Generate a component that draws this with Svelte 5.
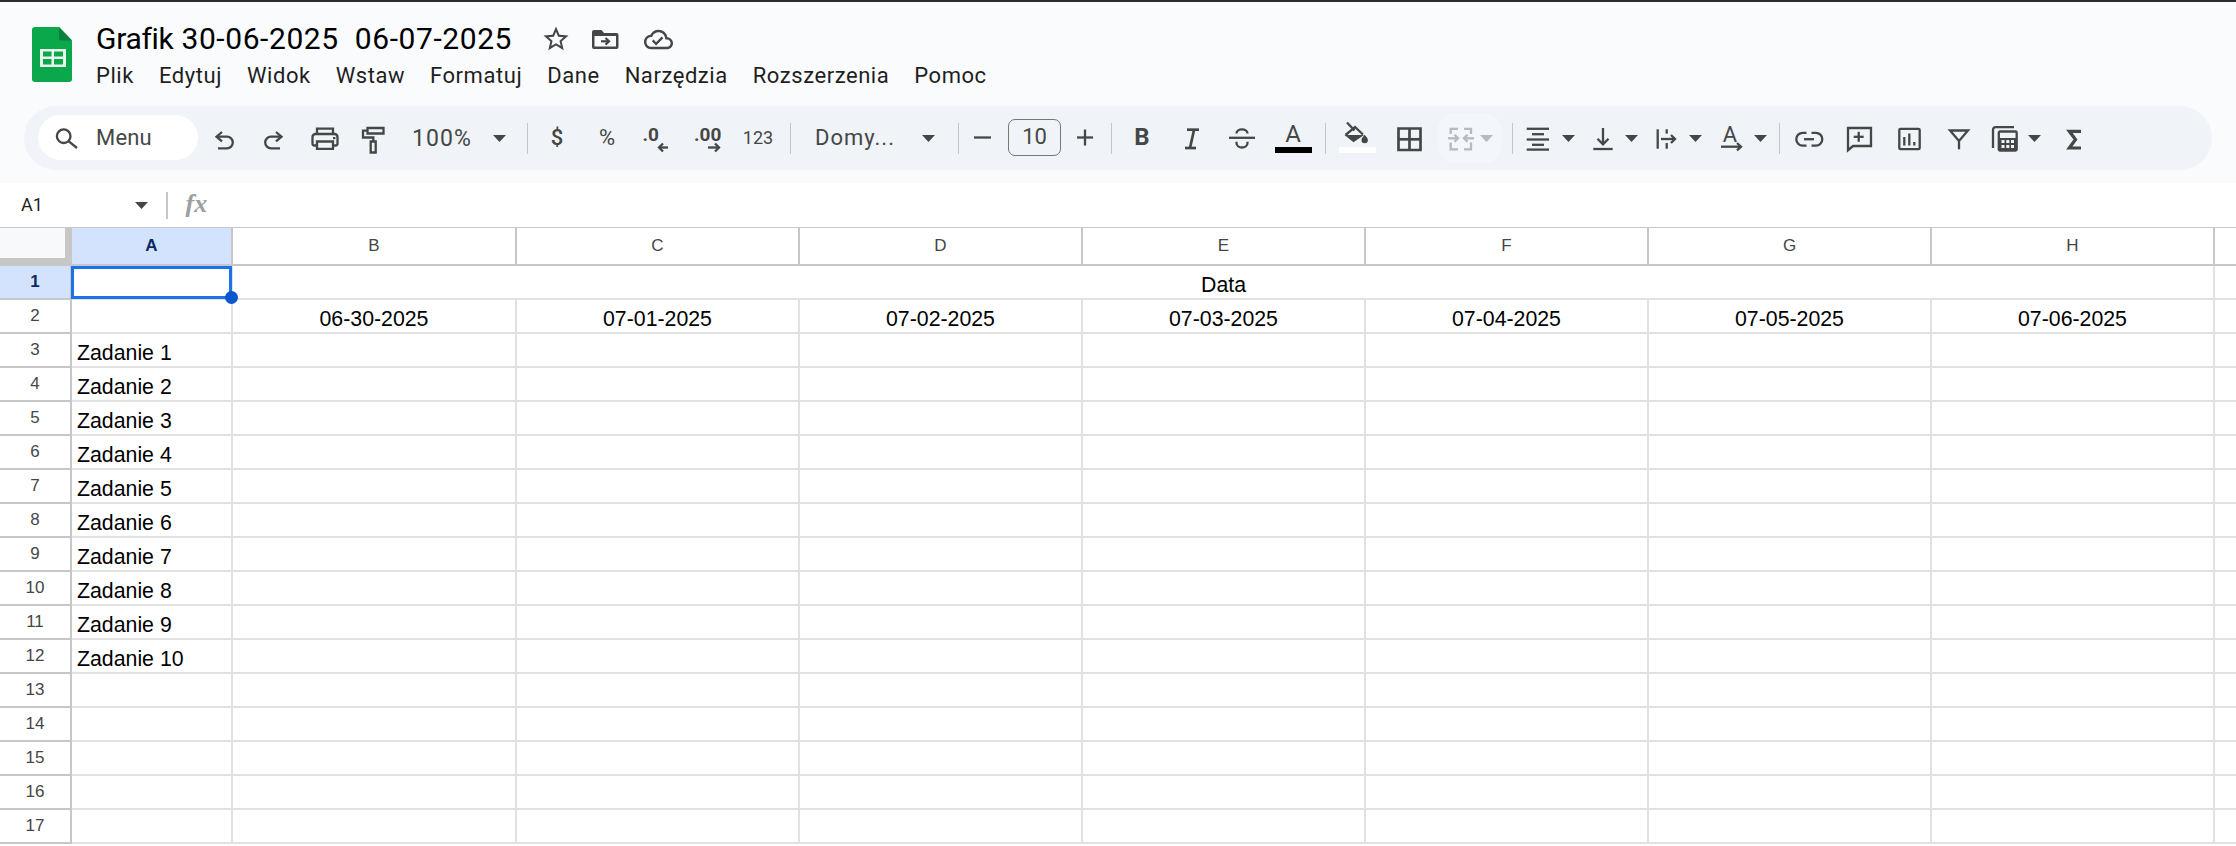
<script>
  const icons = {
    undo: { s: ['M16 12l-5.5 4.7 5.5 4.7', 'M11 16.7h10a5.8 5.8 0 0 1 0 11.6h-9'] },
    redo: { s: ['M20 12l5.5 4.7-5.5 4.7', 'M25 16.7H15a5.8 5.8 0 0 0 0 11.6h9'] },
    print: { s: ['M10 14V8.7h16V14', 'M10 25.5H7.5a2 2 0 0 1-2-2v-6.5a3 3 0 0 1 3-3h19a3 3 0 0 1 3 3v6.5a2 2 0 0 1-2 2H26', 'M10 21.5h16v7.3H10z'], f: ['M26 17h2.4v2.2H26z'] },
    paint: { s: ['M12.5 8h16v5.5h-16z', 'M12.5 10.7H8v6.8h10.3V21', 'M15.7 21.5h5v11h-5z'] },
    dec: { s: ['M29 27.5h-9', 'M24 23.5l-4 4 4 4'], t: { x: 3.5, y: 21, v: '.0', size: 19, w: 700 } },
    inc: { s: ['M18 27.5h11', 'M25 23.5l4 4-4 4'], t: { x: 4, y: 21, v: '.00', size: 19, w: 700 } },
    italic: { s: ['M13 9.7h12', 'M11 28h11', 'M20 10l-4 18'], bold: true },
    strike: { s: ['M5 17.8h26', 'M12.5 13.5c0-5.5 11-5.5 11 0', 'M12.5 21.7v1.3c0 6 11 6 11 0v-1.3'] },
    fill: { s: ['M8 2.5l7.5 8', 'M6.5 15l9.5-8 8 7.5'], f: ['M5.5 15h19.6l-10.6 7.2z', 'M25.7 14.7c1.6 2.3 3.2 3.6 3.2 5.3a3.2 3.2 0 0 1-6.4 0c0-1.7 1.6-3 3.2-5.3z'] },
    borders: { s: ['M7.5 8.5h22v21.5h-22z', 'M18.5 8.5v21.5', 'M7.5 19.3h22'], bold: true },
    merge: { s: ['M15 8.8H7.7v5.2', 'M7.7 22.5v6.8H15', 'M21 8.8h7v5.2', 'M28 22.5v6.8h-7', 'M5 18.3h9.5', 'M11.5 14.8l3.5 3.5-3.5 3.5', 'M31 18.3h-9.5', 'M24.5 14.8L21 18.3l3.5 3.5'], muted: true },
    align: { s: ['M6.7 8.8H29', 'M12 14.2h12', 'M6.7 19.5H29', 'M12 24.8h12', 'M6.7 29.6H29'] },
    valign: { s: ['M8.3 29h19.4', 'M18 8v16', 'M12.5 18.8L18 24.3l5.5-5.5'] },
    wrap: { s: ['M8.7 9.3v19.4', 'M17.7 9.3v4.3', 'M17.7 23v5.7', 'M12 19h14', 'M22 15l4 4-4 4'] },
    rotate: { s: ['M8 26.7h20', 'M24 23l4 3.7-4 3.7'], t: { x: 17, y: 22, v: 'A', size: 22, w: 400, anchor: 'middle' } },
    link: { s: ['M15.5 12.8h-3.8a6.4 6.4 0 0 0 0 12.8h3.8', 'M20.5 12.8h4.4a6.4 6.4 0 0 1 0 12.8h-4.4', 'M13 19.2h10'] },
    comment: { s: ['M7 8h23v18H12l-5 4.2z', 'M17.7 11.8v10', 'M12.7 16.8h10'] },
    chart: { s: ['M9.5 8.8h18a1.2 1.2 0 0 1 1.2 1.2v18a1.2 1.2 0 0 1-1.2 1.2h-18a1.2 1.2 0 0 1-1.2-1.2V10a1.2 1.2 0 0 1 1.2-1.2z', 'M13.3 17v8.5', 'M18.3 13.5v12', 'M23.3 22v3.5'] },
    filter: { s: ['M9 10.5h18l-9 10.5z', 'M18 21v8.3'] },
    calc: { s: ['M25 7.2H6.5a2.5 2.5 0 0 0-2.5 2.5V28', 'M11 11.5h15.5a1.2 1.2 0 0 1 1.2 1.2v16.6a1.2 1.2 0 0 1-1.2 1.2H11a1.2 1.2 0 0 1-1.2-1.2V12.7A1.2 1.2 0 0 1 11 11.5z'], f: ['M10 18h17.5v12.5H10z'], w: ['M12.5 20h3v3h-3zM17.3 20h3v3h-3zM22 20h3v3h-3zM12.5 25h3v3h-3zM17.3 25h3v3h-3zM22 25h3v3h-3z'] },
    sigma: { s: ['M24 11.3H12.3l6.2 8.2-6.2 8.5H24'], heavy: true },
    minus: { s: ['M9 17.5h17'] },
    plus: { s: ['M10 17.5h16', 'M18 9.5v16'] }
  };

  const menus = ['Plik', 'Edytuj', 'Widok', 'Wstaw', 'Formatuj', 'Dane', 'Narzędzia', 'Rozszerzenia', 'Pomoc'];

  const tools = [
    { i: 'undo', w: 52 }, { i: 'redo', w: 48 }, { i: 'print', w: 54 }, { i: 'paint', w: 42 },
    { text: '100%', w: 96, cls: 'zoomv' }, { arrow: 1, w: 18 },
    { sep: 1, ml: 19 },
    { text: '$', w: 50, ml: 4, cls: 'dollar' }, { text: '%', w: 50, cls: 'pct' },
    { i: 'dec', w: 50 }, { i: 'inc', w: 51 }, { text: '123', w: 50, cls: 'num' },
    { sep: 1, ml: 7 },
    { text: 'Domy...', w: 127, cls: 'font' }, { arrow: 1, w: 20 },
    { sep: 1, ml: 20 },
    { i: 'minus', w: 48 }, { text: '10', w: 53, ml: 1, cls: 'size' }, { i: 'plus', w: 48 },
    { sep: 1, ml: 2 },
    { text: 'B', w: 60, cls: 'bold' }, { i: 'italic', w: 40 }, { i: 'strike', w: 60 },
    { color: 'A', w: 42 },
    { sep: 1, ml: 11 },
    { fill: 1, w: 62 }, { i: 'borders', w: 42 },
    { merge: 1, w: 63, ml: 8 },
    { sep: 1, ml: 11 },
    { i: 'align', w: 50 }, { arrow: 1, w: 10 }, { i: 'valign', w: 36, ml: 12 }, { arrow: 1, w: 20 },
    { i: 'wrap', w: 36, ml: 8 }, { arrow: 1, w: 20 }, { i: 'rotate', w: 36, ml: 8 }, { arrow: 1, w: 22 },
    { sep: 1, ml: 8 },
    { i: 'link', w: 58 }, { i: 'comment', w: 42 }, { i: 'chart', w: 58 }, { i: 'filter', w: 42 },
    { i: 'calc', w: 36, ml: 9 }, { arrow: 1, w: 19 }, { i: 'sigma', w: 62 }
  ];

  const cols = ['A', 'B', 'C', 'D', 'E', 'F', 'G', 'H'];
  const dates = ['06-30-2025', '07-01-2025', '07-02-2025', '07-03-2025', '07-04-2025', '07-05-2025', '07-06-2025'];
  const blanks = Array(8).fill(0);
  const rows = Array.from({ length: 15 }, (_, k) => {
    const n = k + 3;
    return { n, label: n <= 12 ? `Zadanie ${n - 2}` : '' };
  });
</script>

{#snippet icon(name)}
  {@const ic = icons[name]}
  <svg class="ico" class:muted={ic.muted} viewBox="0 0 36 36" width="36" height="36">
    {#each ic.f ?? [] as d}<path class="solid" {d} />{/each}
    {#each ic.w ?? [] as d}<path class="hole" {d} />{/each}
    {#each ic.s as d}<path class="line" class:thick={ic.bold} class:heavy={ic.heavy} {d} />{/each}
    {#if ic.t}
      <text class="svgt" x={ic.t.x} y={ic.t.y} font-size={ic.t.size} font-weight={ic.t.w} text-anchor={ic.t.anchor ?? 'start'}>{ic.t.v}</text>
    {/if}
  </svg>
{/snippet}

{#snippet caret(muted)}
  <svg class="caret" class:muted viewBox="0 0 13 7" width="13" height="7"><path d="M0 0h13L6.5 7z" /></svg>
{/snippet}

<div class="page">
  <header class="head">
    <div class="top">
      <svg class="logo" viewBox="0 0 40 55" width="40" height="55">
        <path d="M3 0h24l13 13.5V52a3 3 0 0 1-3 3H3a3 3 0 0 1-3-3V3a3 3 0 0 1 3-3z" fill="#0aa84b" />
        <path d="M27 0l13 13.5H29.5A2.5 2.5 0 0 1 27 11z" fill="#0b8040" />
        <path d="M8 22h26v18H8z" fill="#e9f7ee" />
        <path d="M11 24.5h8.5v5H11zM22 24.5h9v5h-9zM11 32h8.5v5.5H11zM22 32h9v5.5h-9z" fill="#0aa84b" />
      </svg>
      <div class="titles">
        <div class="title-row">
          <span class="title"><span class="tname">Grafik</span> 30-06-2025  06-07-2025</span>
          <svg class="star" viewBox="0 0 24 24" width="30" height="30"><path d="M22 9.24l-7.19-.62L12 2 9.19 8.63 2 9.24l5.46 4.73L5.82 21 12 17.27 18.18 21l-1.63-7.03L22 9.24zM12 15.4l-3.76 2.27 1-4.28-3.32-2.88 4.38-.38L12 6.1l1.71 4.04 4.38.38-3.32 2.88 1 4.28L12 15.4z" /></svg>
          <svg class="folder" viewBox="0 0 36 36" width="36" height="36">
            <path fill-rule="evenodd" d="M7 9h7.5l2.5 3h12.5a2 2 0 0 1 2 2v12a2 2 0 0 1-2 2H7a2 2 0 0 1-2-2V11a2 2 0 0 1 2-2zM7.5 15v10.5h21.5V15z" />
            <path class="fline" d="M14 20.3h7.5" /><path class="fline" d="M18.5 17l3.5 3.3-3.5 3.3" />
          </svg>
          <svg class="cloud" viewBox="0 0 24 24" width="29" height="29"><path d="M19.35 10.04C18.67 6.59 15.64 4 12 4 9.11 4 6.6 5.64 5.35 8.04 2.34 8.36 0 10.91 0 14c0 3.31 2.69 6 6 6h13c2.76 0 5-2.24 5-5 0-2.64-2.05-4.78-4.65-4.96zM19 18H6c-2.21 0-4-1.79-4-4 0-2.05 1.53-3.76 3.56-3.97l1.07-.11.5-.95C8.08 7.14 9.94 6 12 6c2.62 0 4.88 1.86 5.39 4.43l.3 1.5 1.53.11c1.56.1 2.78 1.41 2.78 2.96 0 1.65-1.35 3-3 3zm-9-3.82l-2.09-2.09L6.5 13.5 10 17l6.01-6.01-1.41-1.41z" /></svg>
        </div>
        <nav class="menus">
          {#each menus as m}<span>{m}</span>{/each}
        </nav>
      </div>
    </div>

    <div class="toolbar">
      <div class="search">
        <svg viewBox="0 0 36 36" width="36" height="36"><circle class="line" cx="14.7" cy="16.2" r="6.8" /><path class="line" d="M19.5 21.2L28 28" /></svg>
        <span>Menu</span>
      </div>
      {#each tools as t}
        {#if t.sep}
          <span class="sep" style:margin-left="{t.ml}px"></span>
        {:else}
          <div class="tool" style:width="{t.w}px" style:margin-left="{t.ml ?? 0}px">
            {#if t.i}
              {@render icon(t.i)}
            {:else if t.arrow}
              {@render caret(false)}
            {:else if t.text}
              <span class={t.cls}>{t.text}</span>
            {:else if t.color}
              <div class="swatch"><span>{t.color}</span><i class="bar black"></i></div>
            {:else if t.fill}
              <div class="fillwrap">{@render icon('fill')}<i class="bar white"></i></div>
            {:else if t.merge}
              <div class="mergebox">{@render icon('merge')}{@render caret(true)}</div>
            {/if}
          </div>
        {/if}
      {/each}
    </div>
  </header>

  <div class="formula">
    <span class="ref">A1</span>
    {@render caret(false)}
    <i class="fsep"></i>
    <span class="fx">fx</span>
  </div>

  <div class="sheet">
    <div class="corner"><i></i></div>
    {#each cols as c, k}
      <div class="ch" class:active={k === 0}>{c}</div>
    {/each}
    <div class="ch last"></div>

    <div class="rh active">1</div>
    <div class="cell"><div class="sel"><i></i></div></div>
    <div class="cell merged">Data</div>
    <div class="cell last"></div>

    <div class="rh">2</div>
    <div class="cell"></div>
    {#each dates as d}<div class="cell center">{d}</div>{/each}
    <div class="cell last"></div>

    {#each rows as r}
      <div class="rh">{r.n}</div>
      <div class="cell">{r.label}</div>
      {#each blanks as _, k}<div class="cell" class:last={k === 7}></div>{/each}
    {/each}
  </div>
</div>

<style>
  :global(body) { margin: 0; background: #fff; }
  .page { width: 2236px; height: 846px; overflow: hidden; font-family: Roboto, "Liberation Sans", sans-serif; color: #444746; }
  .head { height: 181px; background: #f9fbfd; border-top: 2px solid #2d2d2f; }
  .top { height: 104px; display: flex; padding-left: 32px; box-sizing: border-box; }
  .logo { margin-top: 25px; flex: none; }
  .titles { margin-left: 24px; padding-top: 20px; }
  .title-row { height: 34px; display: flex; align-items: center; }
  .title { font-size: 30px; line-height: 34px; color: #000; white-space: pre; width: 416px; letter-spacing: .58px; }
  .tname { letter-spacing: -.3px; }
  .star { margin-left: 29px; fill: #444746; flex: none; }
  .folder { margin-left: 16px; fill: #444746; flex: none; }
  .fline { fill: none; stroke: #444746; stroke-width: 2.2; }
  .cloud { margin-left: 21px; fill: #444746; flex: none; }
  .menus { display: flex; gap: 25px; height: 34px; align-items: center; margin-top: 2px; font-size: 22px; letter-spacing: .55px; color: #1f1f1f; }

  .toolbar { margin-left: 24px; width: 2188px; height: 64px; box-sizing: border-box; padding-left: 14px; background: #f0f3f8; border-radius: 32px; display: flex; align-items: center; }
  .search { width: 160px; height: 45px; flex: none; background: #fff; border-radius: 23px; display: flex; align-items: center; padding-left: 11px; box-sizing: border-box; margin-top: -1px; font-size: 22px; }
  .search span { margin-left: 11px; letter-spacing: .2px; }
  .tool { flex: none; height: 64px; display: flex; align-items: center; justify-content: center; font-size: 22px; }
  .sep { width: 1px; height: 31px; background: #c4c7c9; flex: none; }
  .ico { flex: none; display: block; }
  .line { fill: none; stroke: #444746; stroke-width: 2.3; }
  .thick { stroke-width: 2.7; }
  .heavy { stroke-width: 3.2; }
  .solid { fill: #444746; }
  .hole { fill: #f0f3f8; }
  .muted .line { stroke: #b7b9bc; }
  .svgt { fill: #444746; font-family: Roboto, sans-serif; }
  .caret { flex: none; fill: #444746; }
  .caret.muted { fill: #b7b9bc; }
  .zoomv { font-size: 23px; letter-spacing: 1.1px; }
  .dollar { font-size: 22px; font-weight: 500; margin-top: -2px; }
  .pct { font-size: 22px; margin-top: -2px; }
  .num { font-size: 18px; margin-top: -2px; }
  .font { width: 103px; margin-left: 24px; letter-spacing: 1px; margin-top: -2px; }
  .size { width: 53px; height: 37px; box-sizing: border-box; border: 1.5px solid #747775; border-radius: 7px; text-align: center; line-height: 34px; margin-top: -2px; }
  .bold { font-size: 24px; font-weight: 700; margin-top: -2px; }
  .swatch, .fillwrap { position: relative; width: 37px; height: 64px; display: flex; justify-content: center; }
  .swatch span { font-size: 24px; line-height: 26px; margin-top: 15px; }
  .fillwrap .ico { margin-top: 14px; }
  .bar { position: absolute; left: 0; top: 41px; width: 37px; height: 6px; }
  .black { background: #000; }
  .white { background: #fff; }
  .mergebox { width: 63px; height: 50px; border-radius: 16px; background: #f3f6fa; display: flex; align-items: center; padding-left: 5px; box-sizing: border-box; }
  .mergebox .caret { margin-left: 1px; }

  .formula { height: 44px; display: flex; align-items: center; padding-left: 21px; box-sizing: border-box; background: #fff; }
  .ref { font: 18px Roboto, sans-serif; color: #1f1f1f; width: 114px; margin-top: -2px; }
  .fsep { width: 1.5px; height: 27px; background: #c7c7c7; margin-left: 18px; }
  .fx { font: italic 700 26px "Liberation Serif", serif; color: #9c9ea0; margin-left: 18px; margin-top: -2px; }

  .sheet { display: grid; grid-template-columns: 72px 161px 284px repeat(6, 283px) 24px; grid-auto-rows: 34px; grid-template-rows: 38px; border-top: 1.5px solid #c7c7c7; font-family: "Liberation Sans", Arial, sans-serif; }
  .corner { background: #c7c7c7; }
  .corner i { display: block; width: 65px; height: 30px; background: #f8f9fa; }
  .ch { box-sizing: border-box; border-right: 2px solid #c7c7c7; border-bottom: 2px solid #c7c7c7; display: flex; align-items: center; justify-content: center; font-size: 17px; color: #444746; }
  .rh { box-sizing: border-box; border-right: 2px solid #c7c7c7; border-bottom: 2px solid #c7c7c7; display: flex; align-items: center; justify-content: center; font-size: 17px; color: #444746; }
  .active { background: #d3e3fd; color: #0b2a62; font-weight: 700; }
  .cell { position: relative; box-sizing: border-box; border-right: 2px solid #e1e1e1; border-bottom: 2px solid #e1e1e1; display: flex; align-items: flex-end; padding: 0 4px 0 5px; font-size: 21.3px; line-height: 26px; color: #000; white-space: nowrap; }
  .center { justify-content: center; padding-left: 0; padding-right: 0; }
  .merged { grid-column: span 7; justify-content: center; }
  .sel { position: absolute; left: -1px; right: -1px; top: 0; bottom: -1px; border: 3px solid #1a73e8; box-sizing: border-box; z-index: 2; }
  .sel i { position: absolute; right: -9px; bottom: -8px; width: 13px; height: 13px; border-radius: 50%; background: #0b57d0; }
  .last { border-right: 0; }
</style>
